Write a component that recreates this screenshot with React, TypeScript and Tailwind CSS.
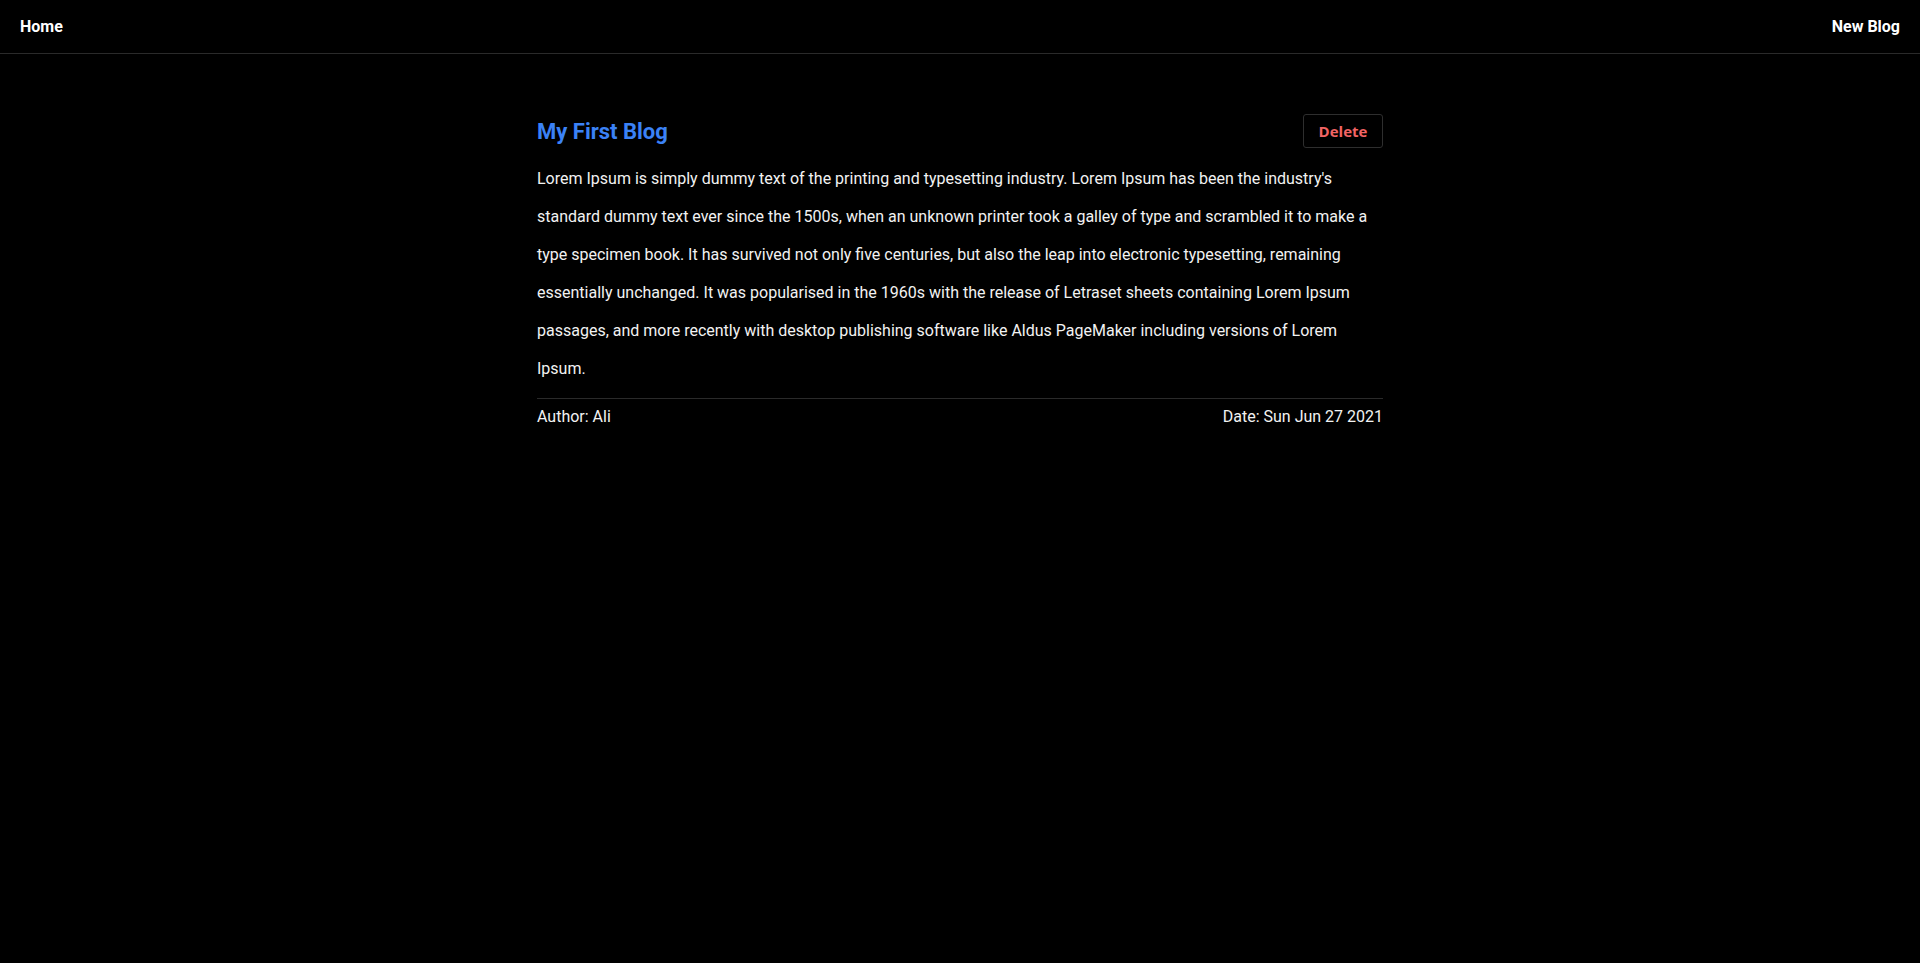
export default function App() {
  const body =
    "Lorem Ipsum is simply dummy text of the printing and typesetting industry. Lorem Ipsum has been the industry's standard dummy text ever since the 1500s, when an unknown printer took a galley of type and scrambled it to make a type specimen book. It has survived not only five centuries, but also the leap into electronic typesetting, remaining essentially unchanged. It was popularised in the 1960s with the release of Letraset sheets containing Lorem Ipsum passages, and more recently with desktop publishing software like Aldus PageMaker including versions of Lorem Ipsum.";

  return (
    <div className="min-h-screen bg-black text-white font-['Roboto',sans-serif]">
      <nav className="h-[54px] flex items-center justify-between px-5 border-b border-[#2a2a2a]">
        <a href="#" className="text-base font-bold">Home</a>
        <a href="#" className="text-base font-bold">New Blog</a>
      </nav>

      <main className="w-[846px] mx-auto pt-[60px]">
        <div className="flex items-center justify-between">
          <h1 className="text-[22px] font-bold text-[#3b82f6]">My First Blog</h1>
          <button className="w-[80px] h-[34px] border border-[#2e2e2e] rounded-[3px] text-[15px] font-bold text-[#f26464] font-['Open_Sans',sans-serif]">
            Delete
          </button>
        </div>
        <p className="mt-[12px] text-base leading-[38px] text-[#f2f2f2]">{body}</p>
        <div className="mt-[10px] border-t border-[#2a2a2a] pt-[6px] flex justify-between text-base text-[#f2f2f2]">
          <span>Author: Ali</span>
          <span>Date: Sun Jun 27 2021</span>
        </div>
      </main>
    </div>
  );
}
